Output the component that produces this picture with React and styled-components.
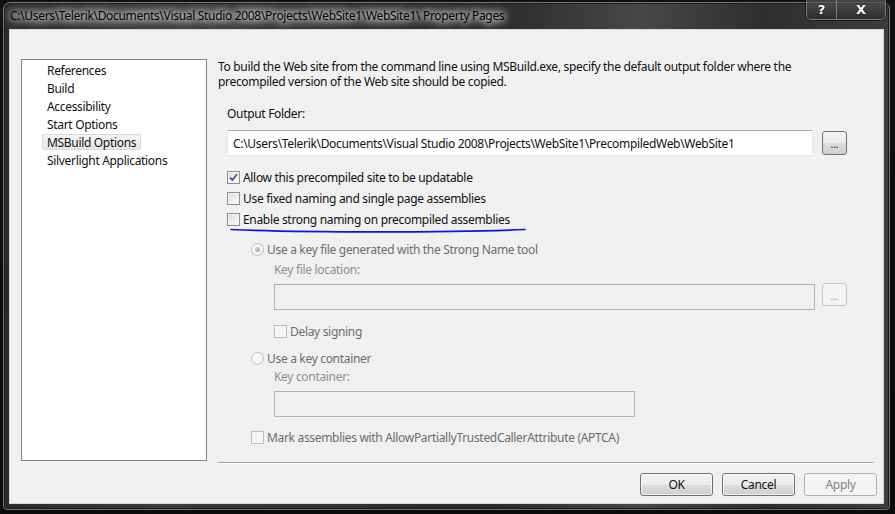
import React from 'react';
import styled, { createGlobalStyle } from 'styled-components';

const uiFont = '"Noto Sans", "Open Sans", "Liberation Sans", sans-serif';

const GlobalStyle = createGlobalStyle`
  html, body {
    margin: 0;
    padding: 0;
    background: #0c0c0c;
  }
  body {
    font-family: ${uiFont};
    font-size: 12px;
    letter-spacing: -0.32px;
    color: #000;
  }
`;

const Desktop = styled.div`
  width: 895px;
  height: 514px;
  box-sizing: border-box;
  padding: 2px 5px 4px 3px;
  display: flex;
  background: linear-gradient(180deg, #111 0%, #0a0a0a 100%);
  overflow: hidden;
`;

const Window = styled.div`
  flex: 1;
  display: flex;
  flex-direction: column;
  padding: 0 5px 5px 5px;
  border: 1px solid #777;
  border-radius: 7px 7px 4px 4px;
  background: linear-gradient(90deg, #2b2b2b 0%, #3b3b3b 18%, #303030 40%, #2a2a2a 55%, #474747 72%, #2e2e2e 86%, #3d3d3d 100%);
  box-shadow: inset 0 0 0 1px #1a1a1a;
`;

const TitleBar = styled.div`
  height: 26px;
  display: flex;
  align-items: flex-start;
  justify-content: space-between;
`;

const Title = styled.div`
  margin-top: 5px;
  padding-left: 1px;
  font-size: 12px;
  line-height: 16px;
  color: #000;
  text-shadow: 0 0 6px #fff, 0 0 10px #fff, 0 0 14px rgba(255, 255, 255, 0.9);
`;

const CaptionButtons = styled.div`
  display: flex;
  margin-top: -3px;
  margin-right: -2px;
  border: 1px solid rgba(170, 170, 170, 0.6);
  border-top: none;
  border-radius: 0 0 5px 5px;
  overflow: hidden;
  box-shadow: 0 0 0 1px rgba(0, 0, 0, 0.5);
`;

const CaptionButton = styled.div`
  width: ${p => p.$w}px;
  height: 19px;
  display: flex;
  align-items: center;
  justify-content: center;
  color: #fff;
  font-family: "DejaVu Sans", sans-serif;
  font-weight: bold;
  font-size: ${p => p.$size}px;
  letter-spacing: 0;
  text-shadow: 0 0 2px rgba(0, 0, 0, 0.8);
  background: linear-gradient(180deg, rgba(90, 90, 90, 0.7), rgba(40, 40, 40, 0.7));
  & + & {
    border-left: 1px solid rgba(170, 170, 170, 0.6);
  }
`;

const Client = styled.div`
  flex: 1;
  display: flex;
  flex-direction: column;
  padding: 29px 6px 7px 11px;
  background: #f0f0f0;
  border: 1px solid #d6d6d6;
`;

const Body = styled.div`
  height: 402px;
  display: flex;
  gap: 11px;
`;

const NavList = styled.div`
  width: 186px;
  box-sizing: border-box;
  background: #fff;
  border: 1px solid #828790;
  padding: 2px 0 0 20px;
  display: flex;
  flex-direction: column;
  gap: 2px;
`;

const NavItem = styled.div`
  height: 16px;
  line-height: 15px;
  padding: 0 4px;
  align-self: flex-start;
  box-sizing: border-box;
  border: 1px solid ${p => (p.$selected ? '#d9d9d9' : 'transparent')};
  border-radius: 2px;
  background: ${p => (p.$selected ? 'linear-gradient(180deg, #f4f4f4, #e6e6e6)' : 'transparent')};
  color: #111;
  white-space: nowrap;
`;

const Panel = styled.div`
  width: 655px;
  display: flex;
  flex-direction: column;
`;

const IntroLine = styled.div`
  height: 15px;
  line-height: 15px;
  color: #111;
  white-space: nowrap;
`;

const Label = styled.div`
  height: 16px;
  line-height: 16px;
  margin-top: ${p => p.$top || 0}px;
  margin-left: ${p => p.$indent || 0}px;
  color: ${p => (p.$disabled ? '#8f8f8f' : '#111')};
`;

const FieldRow = styled.div`
  display: flex;
  align-items: ${p => p.$align || 'center'};
  gap: ${p => p.$gap || 9}px;
  margin-top: ${p => p.$top || 0}px;
  margin-left: ${p => p.$indent || 0}px;
`;

const TextBox = styled.div`
  width: ${p => p.$w}px;
  height: 26px;
  box-sizing: border-box;
  padding-left: 5px;
  display: flex;
  align-items: center;
  background: ${p => (p.$disabled ? '#f0f0f0' : '#fff')};
  border: 1px solid ${p => (p.$disabled ? '#b4b4b4' : '#e3e9ef')};
  border-top-color: ${p => (p.$disabled ? '#adb2b5' : '#abadb3')};
  color: #111;
  white-space: nowrap;
  overflow: hidden;
`;

const BrowseButton = styled.div`
  width: 25px;
  height: ${p => p.$h || 24}px;
  margin-top: ${p => p.$top || 0}px;
  box-sizing: border-box;
  display: flex;
  align-items: center;
  justify-content: center;
  padding-top: 2px;
  border: 1px solid ${p => (p.$disabled ? '#c0c4c7' : '#707070')};
  border-radius: 3px;
  background: ${p =>
    p.$disabled
      ? '#f4f4f4'
      : 'linear-gradient(180deg, #f2f2f2 0%, #ebebeb 50%, #dddddd 51%, #cfcfcf 100%)'};
  color: ${p => (p.$disabled ? '#9a9a9a' : '#111')};
  font-size: 10px;
  letter-spacing: 0;
`;

const Choice = styled.div`
  height: 21px;
  display: flex;
  align-items: center;
  gap: 3px;
  margin-top: ${p => p.$top || 0}px;
  margin-left: ${p => p.$indent || 0}px;
  color: ${p => (p.$disabled ? '#6d6d6d' : '#111')};
  white-space: nowrap;
`;

const Box = styled.div`
  width: 13px;
  height: 13px;
  box-sizing: border-box;
  flex: none;
  border: 1px solid ${p => (p.$disabled ? '#bcbcbc' : '#8e8f8f')};
  background: ${p =>
    p.$disabled
      ? '#f4f4f4'
      : 'linear-gradient(135deg, #dcdcdc 0%, #f0f0f0 60%, #fcfcfc 100%)'};
  box-shadow: inset 0 0 0 1px ${p => (p.$disabled ? '#f9f9f9' : '#f4f4f4')};
  display: flex;
  align-items: center;
  justify-content: center;
`;

const Radio = styled.div`
  width: 13px;
  height: 13px;
  box-sizing: border-box;
  flex: none;
  border-radius: 50%;
  border: 1px solid #c2c2c2;
  background: radial-gradient(circle at 40% 40%, #fdfdfd 0%, #ececec 100%);
  display: flex;
  align-items: center;
  justify-content: center;
`;

const RadioDot = styled.div`
  width: 5px;
  height: 5px;
  border-radius: 50%;
  background: radial-gradient(circle at 35% 35%, #d0d0d0, #9a9a9a);
`;

const CheckGroup = styled.div`
  position: relative;
  margin-top: 11px;
`;

const Scribble = styled.svg`
  position: absolute;
  left: 12px;
  top: 61px;
  overflow: visible;
`;

const Separator = styled.div`
  margin-top: auto;
  margin-bottom: -2px;
  height: 1px;
  background: #a0a0a0;
  box-shadow: 0 1px 0 #fff;
`;

const Footer = styled.div`
  display: flex;
  justify-content: flex-end;
  gap: 9px;
  margin-top: 12px;
`;

const DialogButton = styled.div`
  width: 73px;
  height: 23px;
  box-sizing: border-box;
  display: flex;
  align-items: center;
  justify-content: center;
  border: 1px solid ${p => (p.$disabled ? '#adb2b5' : '#707070')};
  border-radius: 3px;
  background: ${p =>
    p.$disabled
      ? '#f4f4f4'
      : 'linear-gradient(180deg, #f2f2f2 0%, #ebebeb 50%, #dddddd 51%, #cfcfcf 100%)'};
  box-shadow: inset 0 0 0 1px ${p => (p.$disabled ? '#f4f4f4' : 'rgba(255,255,255,0.7)')};
  color: ${p => (p.$disabled ? '#838383' : '#111')};
`;

const Check = () => (
  <svg width="9" height="9" viewBox="0 0 9 9">
    <path d="M1 4.6 L3.4 7 L8 1.2" fill="none" stroke="#3b5296" strokeWidth="1.7" />
  </svg>
);

const CheckBox = ({ checked, disabled, children, top, indent }) => (
  <Choice $top={top} $indent={indent} $disabled={disabled}>
    <Box $disabled={disabled}>{checked && <Check />}</Box>
    {children}
  </Choice>
);

const RadioOption = ({ checked, children, top, indent }) => (
  <Choice $top={top} $indent={indent} $disabled>
    <Radio>{checked && <RadioDot />}</Radio>
    {children}
  </Choice>
);

const pages = [
  'References',
  'Build',
  'Accessibility',
  'Start Options',
  'MSBuild Options',
  'Silverlight Applications',
];

export default function App() {
  return (
    <Desktop>
      <GlobalStyle />
      <Window>
        <TitleBar>
          <Title>C:\Users\Telerik\Documents\Visual Studio 2008\Projects\WebSite1\WebSite1\ Property Pages</Title>
          <CaptionButtons>
            <CaptionButton $w={29} $size={13}>?</CaptionButton>
            <CaptionButton $w={48} $size={13}>X</CaptionButton>
          </CaptionButtons>
        </TitleBar>

        <Client>
          <Body>
            <NavList>
              {pages.map(p => (
                <NavItem key={p} $selected={p === 'MSBuild Options'}>{p}</NavItem>
              ))}
            </NavList>

            <Panel>
              <IntroLine>To build the Web site from the command line using MSBuild.exe, specify the default output folder where the</IntroLine>
              <IntroLine>precompiled version of the Web site should be copied.</IntroLine>

              <Label $top={17} $indent={9}>Output Folder:</Label>
              <FieldRow $top={8} $indent={9} $gap={9}>
                <TextBox $w={586}>C:\Users\Telerik\Documents\Visual Studio 2008\Projects\WebSite1\PrecompiledWeb\WebSite1</TextBox>
                <BrowseButton>...</BrowseButton>
              </FieldRow>

              <CheckGroup>
                <CheckBox checked indent={9}>Allow this precompiled site to be updatable</CheckBox>
                <CheckBox indent={9}>Use fixed naming and single page assemblies</CheckBox>
                <CheckBox indent={9}>Enable strong naming on precompiled assemblies</CheckBox>
                <Scribble width="296" height="6" viewBox="0 0 296 6">
                  <path d="M1 1.5 C 70 4.5, 220 4.8, 295 1.5" fill="none" stroke="#1212e6" strokeWidth="1.6" strokeLinecap="round" />
                </Scribble>
              </CheckGroup>

              <RadioOption checked top={9} indent={33}>Use a key file generated with the Strong Name tool</RadioOption>
              <Label $top={2} $indent={56} $disabled>Key file location:</Label>
              <FieldRow $top={6} $indent={56} $gap={7} $align="flex-start">
                <TextBox $w={541} $disabled />
                <BrowseButton $disabled $h={23} $top={-1}>...</BrowseButton>
              </FieldRow>
              <CheckBox disabled top={11} indent={56}>Delay signing</CheckBox>

              <RadioOption top={6} indent={33}>Use a key container</RadioOption>
              <Label $indent={56} $disabled>Key container:</Label>
              <FieldRow $top={6} $indent={56}>
                <TextBox $w={361} $disabled />
              </FieldRow>

              <CheckBox disabled top={10} indent={33}>Mark assemblies with AllowPartiallyTrustedCallerAttribute (APTCA)</CheckBox>

              <Separator />
            </Panel>
          </Body>

          <Footer>
            <DialogButton>OK</DialogButton>
            <DialogButton>Cancel</DialogButton>
            <DialogButton $disabled>Apply</DialogButton>
          </Footer>
        </Client>
      </Window>
    </Desktop>
  );
}
